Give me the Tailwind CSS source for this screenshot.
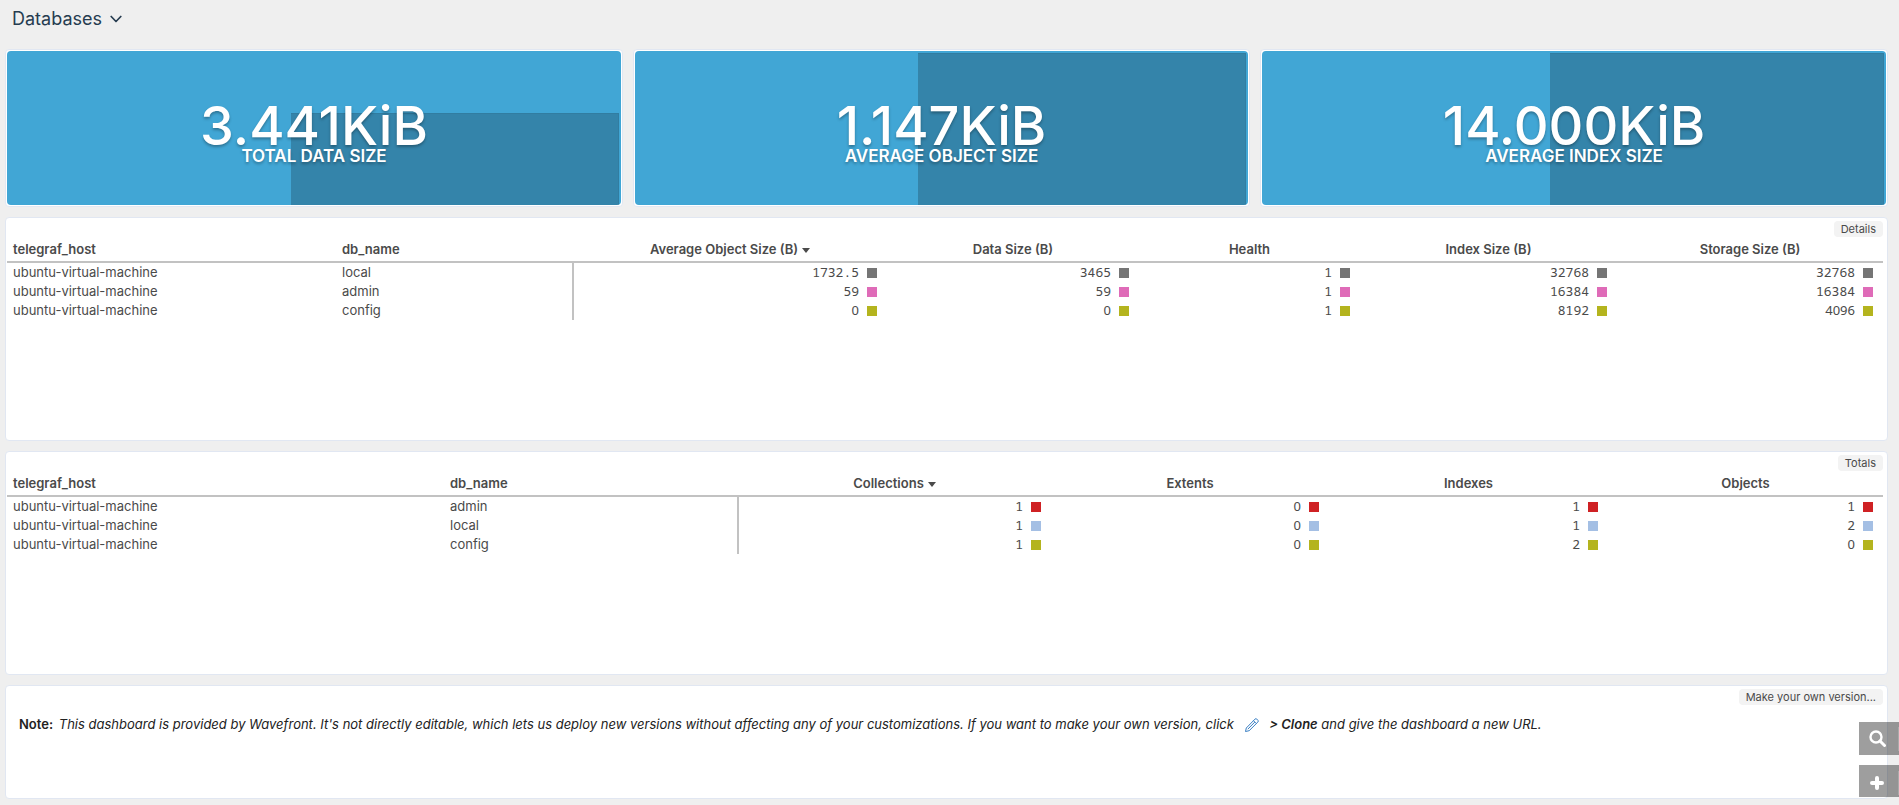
<!DOCTYPE html>
<html lang="en">
<head>
<meta charset="utf-8">
<title>Databases</title>
<script src="https://cdn.jsdelivr.net/npm/@tailwindcss/browser@4"></script>
</head>
<body class="min-h-screen bg-[#efefef] font-['Inter',sans-serif] text-[13px] text-[#4a4a4a]">
<header class="flex h-[49px] items-start pt-2 pl-3">
  <button type="button" class="flex items-center gap-2 text-lg leading-[22px] text-[#263c50]">
    Databases
    <svg class="h-2 w-3" viewBox="0 0 12 8" fill="none" stroke="#263c50" stroke-width="1.7" stroke-linecap="round" stroke-linejoin="round"><path d="M1.200 1.500 6 6.500l4.800-5"/></svg>
  </button>
</header>

<main class="flex flex-col gap-[10px] pr-[11px] pb-1.5 pl-[5px]">
  <div class="grid grid-cols-[618fr_617fr_628fr] gap-[10px]">
    <section class="rounded-sm border border-[#e1e7f2] bg-white p-px">
      <div class="relative flex h-[154px] flex-col items-center overflow-hidden rounded-sm bg-[#41a6d5] pt-[55px] text-white [text-shadow:0_2px_3px_rgba(0,0,0,0.3)]">
        <div class="absolute top-[62px] right-0.5 bottom-0 left-[46.2%] border-t border-r border-black/5 bg-black/20"></div>
        <p class="relative text-[54px] leading-10 font-medium">3.441KiB</p>
        <h2 class="relative text-[17px] leading-5 font-semibold">TOTAL DATA SIZE</h2>
      </div>
    </section>
    <section class="rounded-sm border border-[#e1e7f2] bg-white p-px">
      <div class="relative flex h-[154px] flex-col items-center overflow-hidden rounded-sm bg-[#41a6d5] pt-[55px] text-white [text-shadow:0_2px_3px_rgba(0,0,0,0.3)]">
        <div class="absolute top-0.5 right-0.5 bottom-0 left-[46.2%] border-t border-r border-black/5 bg-black/20"></div>
        <p class="relative text-[54px] leading-10 font-medium">1.147KiB</p>
        <h2 class="relative text-[17px] leading-5 font-semibold">AVERAGE OBJECT SIZE</h2>
      </div>
    </section>
    <section class="rounded-sm border border-[#e1e7f2] bg-white p-px">
      <div class="relative flex h-[154px] flex-col items-center overflow-hidden rounded-sm bg-[#41a6d5] pt-[55px] text-white [text-shadow:0_2px_3px_rgba(0,0,0,0.3)]">
        <div class="absolute top-0.5 right-0.5 bottom-0 left-[46.2%] border-t border-r border-black/5 bg-black/20"></div>
        <p class="relative text-[54px] leading-10 font-medium">14.000KiB</p>
        <h2 class="relative text-[17px] leading-5 font-semibold">AVERAGE INDEX SIZE</h2>
      </div>
    </section>
  </div>

  <section class="min-h-56 rounded-sm border border-[#e1e7f2] bg-white pt-[3px] pr-1 pl-px">
    <div class="flex justify-end"><h2 class="rounded bg-[#f3f3f3] px-[7px] text-[11px] leading-4">Details</h2></div>
    <table class="w-full table-fixed border-collapse">
      <colgroup><col class="w-[329px]"><col class="w-[237px]"><col class="w-[314px]"><col class="w-[252px]"><col class="w-[221px]"><col class="w-[257px]"><col class="w-[266px]"></colgroup>
      <thead>
        <tr class="h-[25px] border-b-2 border-[#c2c2c2]">
          <th class="p-0 pt-0.5 pl-1.5 text-left font-semibold">telegraf_host</th>
          <th class="p-0 pt-0.5 pl-1.5 text-left font-semibold">db_name</th>
          <th class="p-0 pt-0.5 font-semibold"><button type="button" class="inline-flex items-center gap-1">Average Object Size (B)<svg class="h-[5px] w-2" viewBox="0 0 8 5" fill="#4a4a4a"><path d="M0 0h8L4 5z"/></svg></button></th>
          <th class="p-0 pt-0.5 font-semibold">Data Size (B)</th>
          <th class="p-0 pt-0.5 font-semibold">Health</th>
          <th class="p-0 pt-0.5 font-semibold">Index Size (B)</th>
          <th class="p-0 pt-0.5 font-semibold">Storage Size (B)</th>
        </tr>
      </thead>
      <tbody id="details"></tbody>
    </table>
  </section>

  <section class="min-h-56 rounded-sm border border-[#e1e7f2] bg-white pt-[3px] pr-1 pl-px">
    <div class="flex justify-end"><h2 class="rounded bg-[#f3f3f3] px-[7px] text-[11px] leading-4">Totals</h2></div>
    <table class="w-full table-fixed border-collapse">
      <colgroup><col class="w-[437px]"><col class="w-[294px]"><col class="w-[313px]"><col class="w-[278px]"><col class="w-[279px]"><col class="w-[275px]"></colgroup>
      <thead>
        <tr class="h-[25px] border-b-2 border-[#c2c2c2]">
          <th class="p-0 pt-0.5 pl-1.5 text-left font-semibold">telegraf_host</th>
          <th class="p-0 pt-0.5 pl-1.5 text-left font-semibold">db_name</th>
          <th class="p-0 pt-0.5 font-semibold"><button type="button" class="inline-flex items-center gap-1">Collections<svg class="h-[5px] w-2" viewBox="0 0 8 5" fill="#4a4a4a"><path d="M0 0h8L4 5z"/></svg></button></th>
          <th class="p-0 pt-0.5 font-semibold">Extents</th>
          <th class="p-0 pt-0.5 font-semibold">Indexes</th>
          <th class="p-0 pt-0.5 font-semibold">Objects</th>
        </tr>
      </thead>
      <tbody id="totals"></tbody>
    </table>
  </section>

  <section class="min-h-[114px] rounded-sm border border-[#e1e7f2] bg-white pt-[3px] pr-1 pl-px">
    <div class="flex justify-end"><h2 class="rounded bg-[#f3f3f3] px-[7px] text-[11px] leading-4">Make your own version...</h2></div>
    <p class="px-3 pt-[9px] leading-5 text-[#222]"><strong class="mr-0.5 font-semibold">Note:</strong> <em>This dashboard is provided by Wavefront. It's not directly editable, which lets us deploy new versions without affecting any of your customizations. If you want to make your own version, click <svg class="mx-1.5 inline h-4 w-4" viewBox="0 0 16 16" fill="none" stroke="#3a7fc4" stroke-width="1" stroke-linejoin="round"><path d="M1.500 14.500 2.300 11 11 2.100q.9-.9 1.800 0l1.100 1.100q.9.9 0 1.800L5.200 13.700zM9.500 3.700l2.900 2.900M10.800 5.100 3.800 12.200"/></svg> <strong class="font-semibold">&gt; Clone</strong> and give the dashboard a new URL.</em></p>
  </section>
</main>

<div class="fixed right-0 bottom-2 flex flex-col gap-[10px]">
  <button type="button" aria-label="Search" class="flex h-[33px] w-10 items-center justify-between bg-black/38 pl-2.5">
    <svg class="h-[17px] w-[17px]" viewBox="0 0 17 17" fill="none" stroke="#fff"><circle cx="7" cy="7" r="5.500" stroke-width="2.400"/><path d="m11 11 4.500 4.500" stroke-width="3" stroke-linecap="round"/></svg>
    <span class="h-6 w-px bg-white/20"></span>
  </button>
  <button type="button" aria-label="Add" class="flex h-8 w-10 items-center justify-between bg-black/38 pt-1 pl-[11px]">
    <svg class="h-3.5 w-3.5" viewBox="0 0 14 14" stroke="#fff" stroke-width="4" stroke-linecap="round"><path d="M7 2v10M2 7h10"/></svg>
    <span class="h-6 w-px bg-white/20"></span>
  </button>
</div>

<script>
const HOST = 'ubuntu-virtual-machine';
const swatches = {
  gray: 'bg-[#757575]', pink: 'bg-[#df6bb8]', olive: 'bg-[#b4b41e]',
  red: 'bg-[#cf2124]', blue: 'bg-[#a4bfe4]'
};
// Noto Sans Mono slashes its zero; values with a zero use the plain face.
const valueFont = v => v.includes('0') ? "font-['Noto_Sans',sans-serif]" : "font-['Noto_Sans_Mono',monospace]";
function fill(id, rows) {
  document.getElementById(id).innerHTML = rows.map(([name, color, ...values]) => `
    <tr class="h-[19px] leading-[19px]">
      <td class="p-0 pl-1.5">${HOST}</td>
      <td class="border-r-2 border-[#c2c2c2] p-0 pl-1.5">${name}</td>
      ${values.map(v => `<td class="p-0 pr-2.5"><div class="flex items-center justify-end gap-2"><span class="${valueFont(v)}">${v}</span><i class="size-2.5 ${swatches[color]}"></i></div></td>`).join('')}
    </tr>`).join('');
}
fill('details', [
  ['local', 'gray', '1732.5', '3465', '1', '32768', '32768'],
  ['admin', 'pink', '59', '59', '1', '16384', '16384'],
  ['config', 'olive', '0', '0', '1', '8192', '4096']
]);
fill('totals', [
  ['admin', 'red', '1', '0', '1', '1'],
  ['local', 'blue', '1', '0', '1', '2'],
  ['config', 'olive', '1', '0', '2', '0']
]);
</script>
</body>
</html>
